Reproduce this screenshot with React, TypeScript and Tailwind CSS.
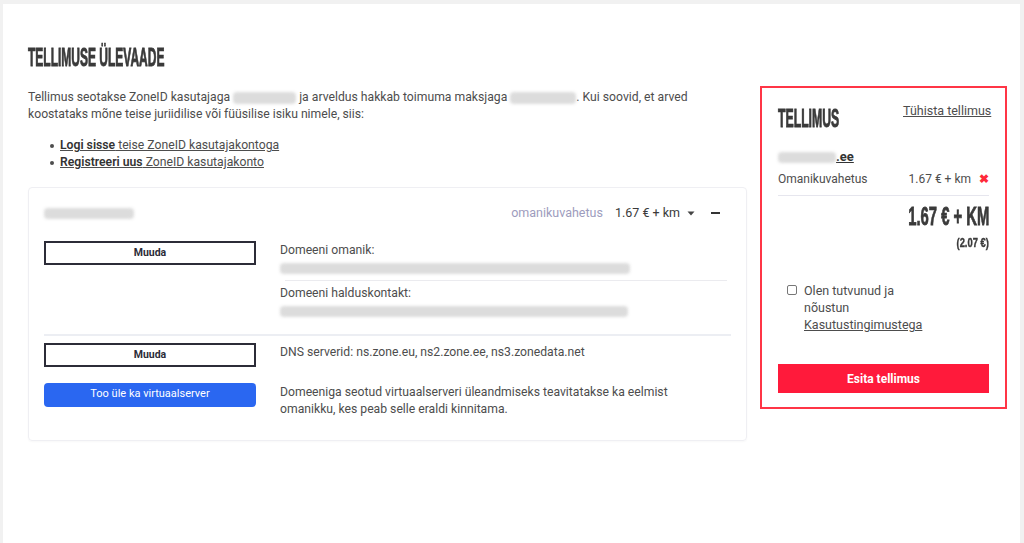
import React from "react";

const body = { fontFamily: "Roboto, 'Noto Sans', sans-serif" };
const cond = { fontFamily: "'Liberation Sans Narrow', 'Liberation Sans', sans-serif" };

function Blur({ w, h = 11, className = "" }: { w: number; h?: number; className?: string }) {
  return (
    <span
      className={"inline-block rounded-sm bg-[#dcdcdc] blur-[1.5px] align-middle " + className}
      style={{ width: w, height: h }}
    />
  );
}

export default function App() {
  return (
    <div className="min-h-screen bg-[#f1f1f1] pl-[3px] pr-[4px] pt-[4px]" style={body}>
      <div className="min-h-[539px] bg-white pl-[25px] pt-[40px]">
        <div className="flex gap-[13px]">
          {/* Left column */}
          <div className="w-[719px]">
            <h1
              className="origin-left scale-x-[0.48] whitespace-nowrap text-[25px] font-bold leading-[26px] text-[#3a3a3a] [-webkit-text-stroke:0.9px_#3a3a3a]"
              style={cond}
            >
              TELLIMUSE ÜLEVAADE
            </h1>
            <p className="mt-[19px] text-[12.2px] leading-[17px] text-[#4d4d4d]">
              Tellimus seotakse ZoneID kasutajaga <Blur w={63} h={12} /> ja arveldus hakkab toimuma maksjaga{" "}
              <Blur w={66} h={12} />. Kui soovid, et arved
              <br />
              koostataks mõne teise juriidilise või füüsilise isiku nimele, siis:
            </p>
            <ul className="mt-[14px] pl-[22px] text-[12.2px] leading-[17px] text-[#4d4d4d]">
              <li className="flex items-center gap-[6px]">
                <span className="h-[4px] w-[4px] rounded-full bg-[#4d4d4d]" />
                <span className="underline">
                  <b className="font-semibold text-[#333]">Logi sisse</b> teise ZoneID kasutajakontoga
                </span>
              </li>
              <li className="flex items-center gap-[6px]">
                <span className="h-[4px] w-[4px] rounded-full bg-[#4d4d4d]" />
                <span className="underline">
                  <b className="font-semibold text-[#333]">Registreeri uus</b> ZoneID kasutajakonto
                </span>
              </li>
            </ul>

            {/* Card */}
            <div className="mt-[16px] h-[254px] rounded-[4px] border border-[#efeff3] px-[15px] pt-[18px] shadow-[0_1px_2px_rgba(0,0,0,0.03)]">
              <div className="flex h-[14px] items-center">
                <Blur w={90} h={11} />
                <div className="ml-auto flex items-center text-[12.5px] text-[#3a3a3a]">
                  <span className="text-[#9d9cbd]">omanikuvahetus</span>
                  <span className="ml-[12px]">1.67 € + km</span>
                  <svg width="8" height="5" viewBox="0 0 8 5" className="ml-[7px]">
                    <path d="M0.5 0.5h7L4 4.5z" fill="#444" />
                  </svg>
                  <span className="ml-[16px] mr-[11px] h-[2px] w-[9px] bg-[#333]" />
                </div>
              </div>

              <div className="mt-[21px] flex">
                <div className="w-[236px] shrink-0">
                  <button className="block h-[24px] w-[212px] border-2 border-[#2c2c38] text-[10.5px] font-bold text-[#2c2c38]">
                    Muuda
                  </button>
                </div>
                <div className="flex-1 pr-[4px] pt-[1px] text-[12.2px] text-[#4d4d4d]">
                  <div className="leading-[16px]">Domeeni omanik:</div>
                  <Blur w={350} h={11} className="mt-[2px] block" />
                  <div className="ml-[5px] mt-[4px] h-px bg-[#ebebef]" />
                  <div className="mt-[4px] leading-[16px]">Domeeni halduskontakt:</div>
                  <Blur w={348} h={11} className="mt-[1px] block" />
                </div>
              </div>

              <div className="mt-[14px] h-[2px] bg-[#eceef3]" />

              <div className="mt-[7px] flex">
                <div className="w-[236px] shrink-0">
                  <button className="block h-[24px] w-[212px] border-2 border-[#2c2c38] text-[10.5px] font-bold text-[#2c2c38]">
                    Muuda
                  </button>
                  <button className="mt-[16px] block h-[24px] w-[212px] rounded-[4px] bg-[#2a67f1] text-[11px] text-white">
                    Too üle ka virtuaalserver
                  </button>
                </div>
                <div className="flex-1 text-[12.2px] text-[#4d4d4d]">
                  <div className="mt-[1px] leading-[17px]">DNS serverid: ns.zone.eu, ns2.zone.ee, ns3.zonedata.net</div>
                  <div className="mt-[23px] leading-[17px]">
                    Domeeniga seotud virtuaalserveri üleandmiseks teavitatakse ka eelmist
                    <br />
                    omanikku, kes peab selle eraldi kinnitama.
                  </div>
                </div>
              </div>
            </div>
          </div>

          {/* Right column */}
          <div className="mt-[42px] h-[323px] w-[247px] border-2 border-[#ff3546] px-[16px] pt-[15px]">
            <div className="flex items-start justify-between">
              <h2
                className="mt-[4px] origin-left scale-x-[0.49] whitespace-nowrap text-[25px] font-bold leading-[22px] text-[#3a3a3a] [-webkit-text-stroke:0.9px_#3a3a3a]"
                style={cond}
              >
                TELLIMUS
              </h2>
              <a className="whitespace-nowrap text-[12.5px] leading-[15px] text-[#4d4d4d] underline">Tühista tellimus</a>
            </div>
            <div className="mt-[20px] flex items-end text-[13px] font-bold leading-[16px] text-[#333]">
              <span className="underline decoration-[#333]">
                <Blur w={58} h={11} />
                .ee
              </span>
            </div>
            <div className="mt-[6px] flex items-center text-[12px] leading-[16px] text-[#4d4d4d]">
              <span>Omanikuvahetus</span>
              <span className="ml-auto">1.67 € + km</span>
              <span className="ml-[8px] text-[12px] font-bold text-[#ff2a3a]">✖</span>
            </div>
            <div className="mt-[8px] h-px bg-[#e6e6ee]" />
            <div
              className="mt-[8px] text-right text-[26px] font-bold leading-[24px] text-[#3a3a3a] [-webkit-text-stroke:0.8px_#3a3a3a]"
              style={cond}
            >
              <span className="inline-block origin-right scale-x-[0.57] whitespace-nowrap">1.67 € + KM</span>
            </div>
            <div
              className="mt-[7px] text-right text-[13px] font-bold leading-[16px] text-[#3a3a3a] [-webkit-text-stroke:0.4px_#3a3a3a]"
              style={cond}
            >
              <span className="inline-block origin-right scale-x-[0.72] whitespace-nowrap">(2.07 €)</span>
            </div>
            <label className="mt-[31px] flex items-start gap-[7px] pl-[9px] text-[12.5px] leading-[17px] text-[#4d4d4d]">
              <span className="mt-[3px] h-[10px] w-[10px] shrink-0 rounded-[2px] border border-[#777]" />
              <span>
                Olen tutvunud ja
                <br />
                nõustun
                <br />
                <span className="underline">Kasutustingimustega</span>
              </span>
            </label>
            <button className="mt-[31px] h-[29px] w-full bg-[#ff1a3b] text-[12px] font-bold text-white">
              Esita tellimus
            </button>
          </div>
        </div>
      </div>
    </div>
  );
}
